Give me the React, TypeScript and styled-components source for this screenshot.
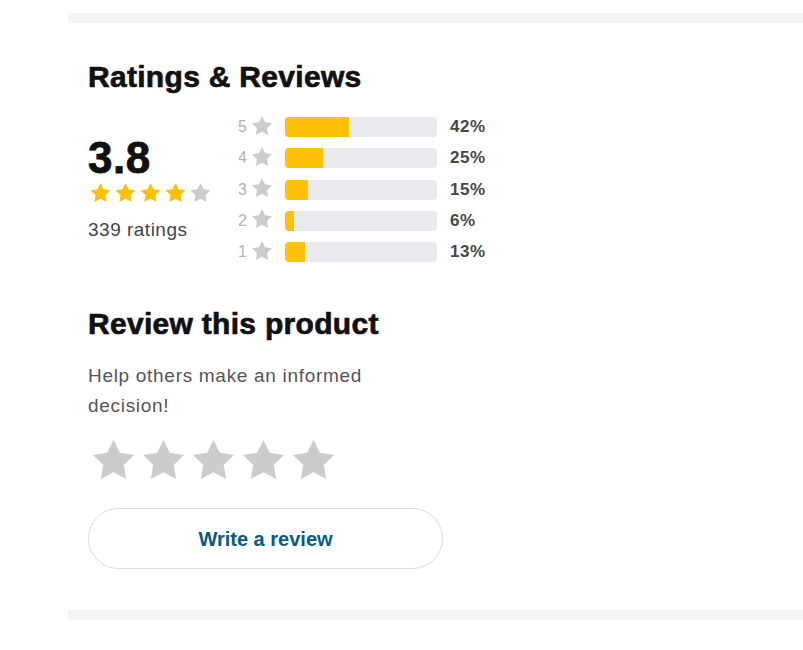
import React from "react";
import styled, { createGlobalStyle } from "styled-components";

const GlobalStyle = createGlobalStyle`
    html, body {
        margin: 0;
        padding: 0;
        background: #ffffff;
    }

    body {
        font-family: "Liberation Sans", Arial, sans-serif;
        color: #111111;
    }
`;

interface StarProps {
    $filled: boolean;
}

interface FillProps {
    $pct: number;
}

const STAR_POINTS = "12,2 15.09,8.26 22,9.27 17,14.14 18.18,21.02 12,17.77 5.82,21.02 7,14.14 2,9.27 8.91,8.26";

const histogram = [
    { stars: 5, pct: 42 },
    { stars: 4, pct: 25 },
    { stars: 3, pct: 15 },
    { stars: 2, pct: 6 },
    { stars: 1, pct: 13 },
];

const Section = styled.section`
    margin: 13px 0 0 68px;
    padding: 36px 20px 41px;
    border-top: 10px solid #f4f4f4;
    border-bottom: 10px solid #f4f4f4;
`;

const Title = styled.h2`
    margin: 0;
    font-size: 30px;
    line-height: 36px;
    font-weight: 700;
    letter-spacing: 0.3px;
    color: #111111;
    -webkit-text-stroke: 0.7px #111111;
`;

const Summary = styled.div`
    display: flex;
    align-items: flex-start;
    margin-top: 22px;
`;

const ScoreBlock = styled.div`
    flex: 0 0 150px;
    display: flex;
    flex-direction: column;
    padding-top: 19px;
`;

const Score = styled.div`
    font-size: 44px;
    line-height: 44px;
    font-weight: 700;
    letter-spacing: 0.5px;
    color: #111111;
    -webkit-text-stroke: 0.8px #111111;
`;

const StarRow = styled.div`
    display: flex;
    margin-top: 3px;
`;

const SmallStar = styled.svg<StarProps>`
    width: 25px;
    height: 19px;
    fill: ${props => props.$filled ? "#ffc107" : "#cccccc"};
`;

const RatingCount = styled.div`
    margin-top: 16px;
    font-size: 19px;
    line-height: 24px;
    letter-spacing: 0.5px;
    color: #444444;
`;

const Histogram = styled.div`
    display: flex;
    flex-direction: column;
    gap: 11.3px;
`;

const HistRow = styled.div`
    display: flex;
    align-items: center;
    height: 20px;
`;

const HistNumber = styled.span`
    width: 10px;
    margin-right: 4px;
    font-size: 16px;
    color: #b4b4b4;
`;

const HistStar = styled.svg`
    width: 20px;
    height: 19px;
    margin-right: 13px;
    margin-top: -4px;
    fill: #cccccc;
`;

const BarTrack = styled.div`
    width: 152px;
    height: 20px;
    border-radius: 4px;
    background: #e8eaed;
    overflow: hidden;
`;

const BarFill = styled.div<FillProps>`
    width: ${props => props.$pct}%;
    height: 100%;
    background: #ffc107;
`;

const HistPct = styled.span`
    margin-left: 13px;
    font-size: 17px;
    font-weight: 700;
    letter-spacing: 0.5px;
    color: #484848;
`;

const ReviewBlock = styled.div`
    width: 355px;
    margin-top: 44px;
`;

const Prompt = styled.p`
    max-width: 320px;
    margin: 19px 0 0;
    font-size: 19px;
    line-height: 30px;
    letter-spacing: 0.7px;
    color: #555555;
`;

const PickRow = styled.div`
    display: flex;
    margin-top: 18px;
`;

const PickStar = styled.button`
    width: 50px;
    height: 40px;
    padding: 0;
    border: none;
    background: none;
    display: flex;
    align-items: center;
    justify-content: center;
    cursor: pointer;

    & svg {
        width: 41px;
        height: 39px;
        fill: #cccccc;
    }
`;

const WriteButton = styled.button`
    width: 355px;
    height: 61px;
    margin-top: 29px;
    padding-top: 2px;
    border: 1px solid #dddddd;
    border-radius: 31px;
    background: #ffffff;
    font-family: "Liberation Sans", Arial, sans-serif;
    font-size: 20px;
    font-weight: 700;
    color: #0a5a85;
    cursor: pointer;
`;

const Star = ({ className }: { className?: string }) => (
    <svg className={className} viewBox="2 2 20 19.02" preserveAspectRatio="xMidYMid meet">
        <polygon points={STAR_POINTS} />
    </svg>
);

export default function App() {
    const score = 3.8;

    return (
        <>
            <GlobalStyle />
            <Section>
                <Title>Ratings &amp; Reviews</Title>
                <Summary>
                    <ScoreBlock>
                        <Score>{score}</Score>
                        <StarRow>
                            {[1, 2, 3, 4, 5].map(i => (
                                <SmallStar key={i} $filled={i <= Math.round(score)} viewBox="-0.5 2 21 19.02">
                                    <polygon points={STAR_POINTS} transform="translate(-2 0)" />
                                </SmallStar>
                            ))}
                        </StarRow>
                        <RatingCount>339 ratings</RatingCount>
                    </ScoreBlock>
                    <Histogram>
                        {histogram.map(row => (
                            <HistRow key={row.stars}>
                                <HistNumber>{row.stars}</HistNumber>
                                <HistStar viewBox="2 2 20 19.02">
                                    <polygon points={STAR_POINTS} />
                                </HistStar>
                                <BarTrack>
                                    <BarFill $pct={row.pct} />
                                </BarTrack>
                                <HistPct>{row.pct}%</HistPct>
                            </HistRow>
                        ))}
                    </Histogram>
                </Summary>
                <ReviewBlock>
                    <Title>Review this product</Title>
                    <Prompt>Help others make an informed decision!</Prompt>
                    <PickRow>
                        {[1, 2, 3, 4, 5].map(i => (
                            <PickStar key={i} aria-label={`${i} stars`}>
                                <Star />
                            </PickStar>
                        ))}
                    </PickRow>
                    <WriteButton>Write a review</WriteButton>
                </ReviewBlock>
            </Section>
        </>
    );
}
